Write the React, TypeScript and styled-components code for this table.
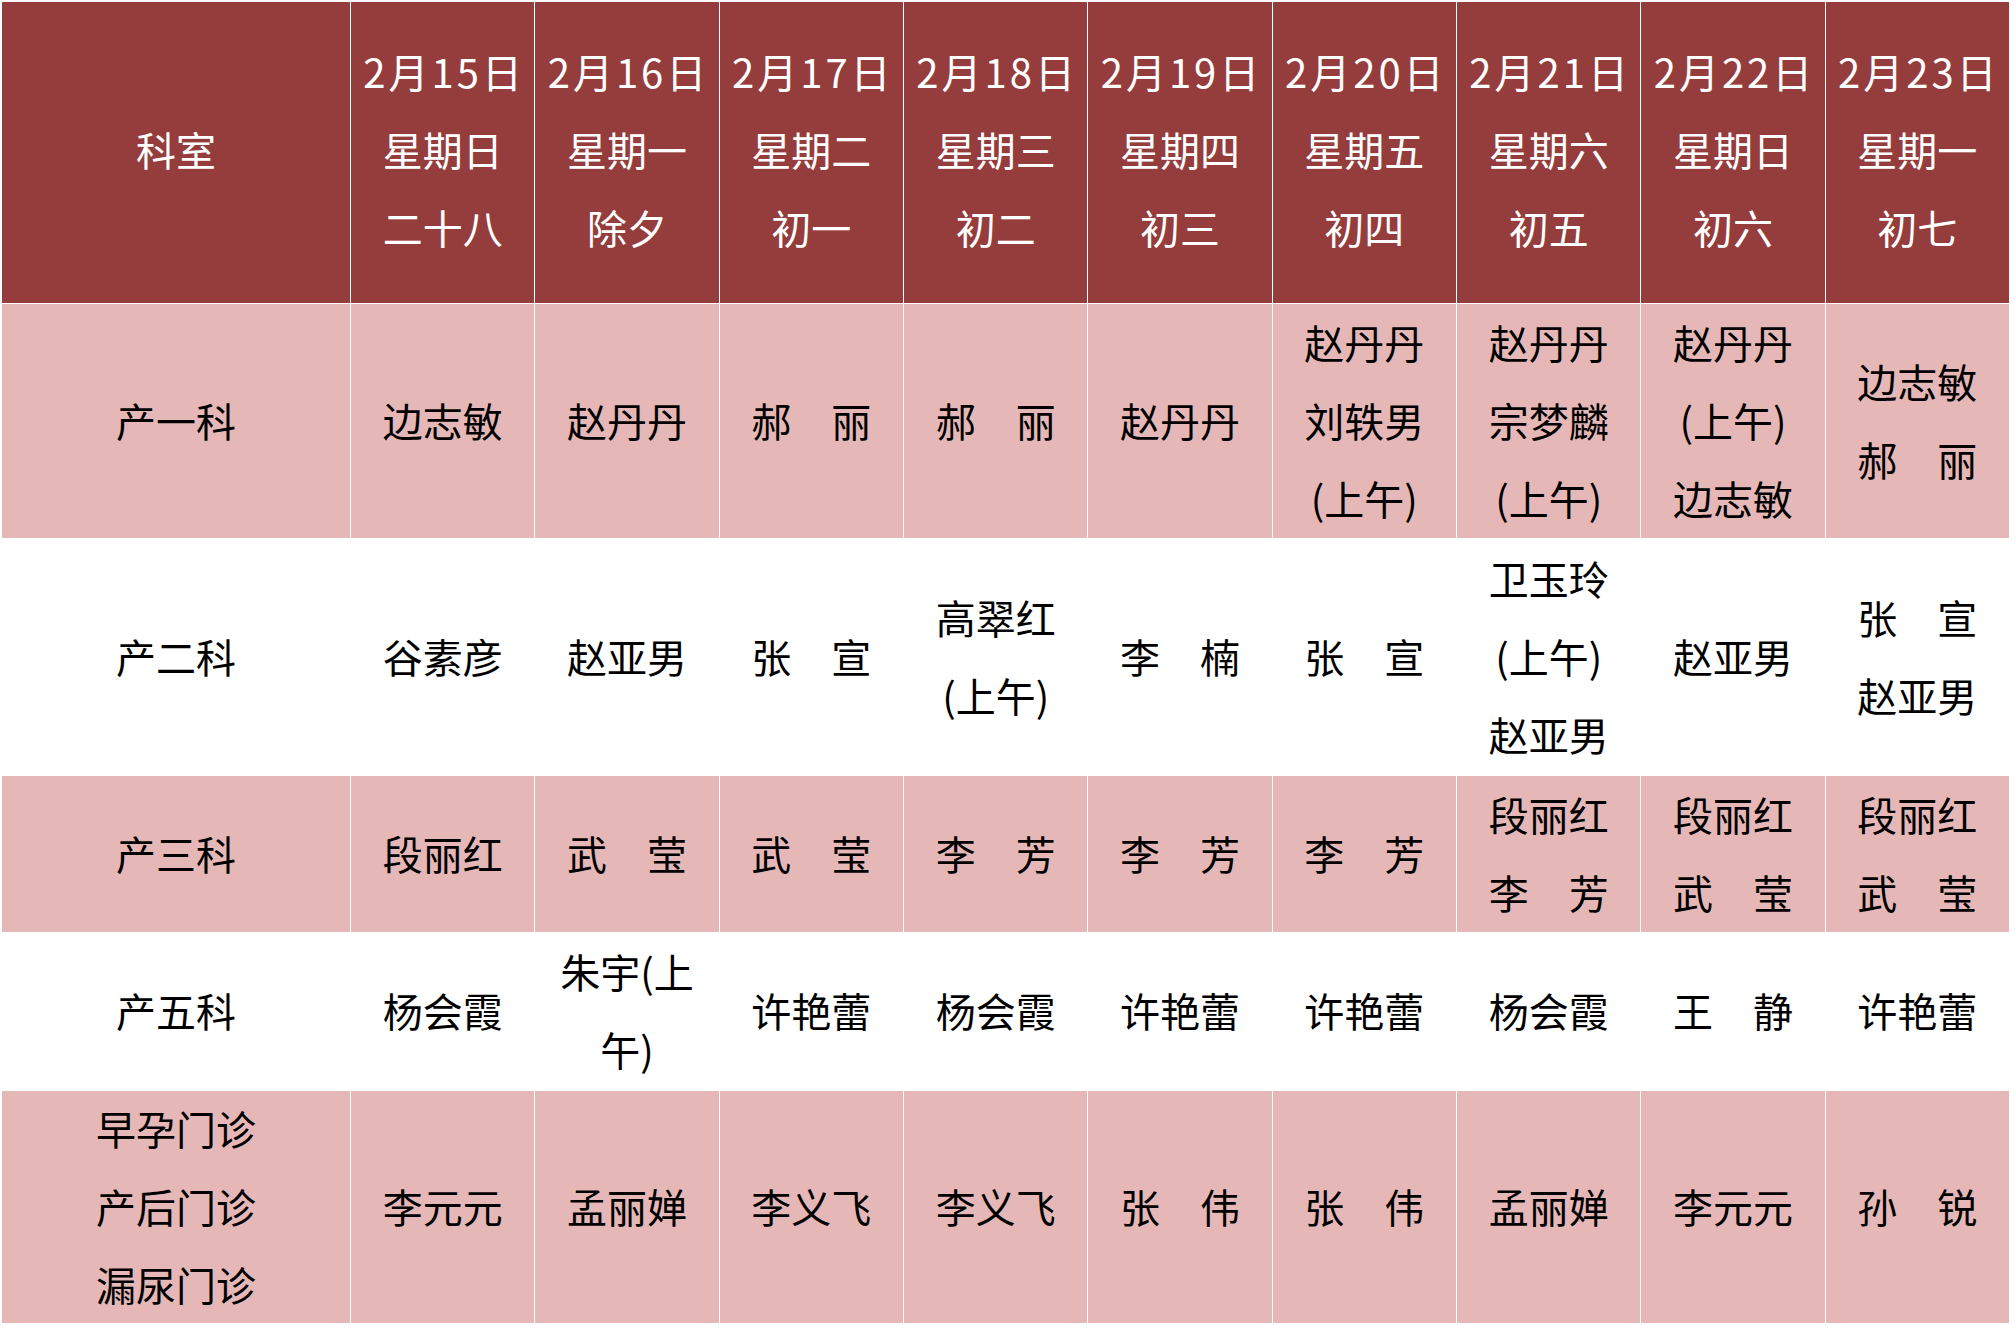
import React from 'react';
import styled, { createGlobalStyle } from 'styled-components';

const GlobalStyle = createGlobalStyle`
  html, body {
    margin: 0;
    padding: 0;
    background: #fff;
  }
  body {
    font-family: "Noto Sans CJK SC", "Noto Sans", sans-serif;
  }
`;

type Tone = 'head' | 'pink' | 'plain';

const Page = styled.div`
  padding: 2px 0 0 2px;
`;

const Table = styled.div`
  display: grid;
  width: 2007px;
  grid-template-columns: 348px repeat(9, 1fr);
  grid-template-rows: 301px 234px 236px 156px 157px 232px;
  gap: 1px;
  background: #fff;
`;

const Cell = styled.div<{ $tone: Tone }>`
  display: flex;
  flex-direction: column;
  align-items: center;
  justify-content: center;
  box-sizing: border-box;
  padding-bottom: ${({ $tone }) => ($tone === 'head' ? '7px' : '3px')};
  background: ${({ $tone }) =>
    $tone === 'head' ? '#953d3c' : $tone === 'pink' ? '#e5b8b7' : '#ffffff'};
  color: ${({ $tone }) => ($tone === 'head' ? '#ffffff' : '#000000')};
  font-size: 40px;
  line-height: 78px;
  white-space: nowrap;
  overflow: hidden;
`;

const Line = styled.span<{ $date?: boolean }>`
  display: block;
  letter-spacing: ${({ $date }) => ($date ? '3px' : '0')};
  margin-right: ${({ $date }) => ($date ? '-3px' : '0')};
`;

const days = [
  ['2月15日', '星期日', '二十八'],
  ['2月16日', '星期一', '除夕'],
  ['2月17日', '星期二', '初一'],
  ['2月18日', '星期三', '初二'],
  ['2月19日', '星期四', '初三'],
  ['2月20日', '星期五', '初四'],
  ['2月21日', '星期六', '初五'],
  ['2月22日', '星期日', '初六'],
  ['2月23日', '星期一', '初七'],
];

// each cell is a list of lines
const rows: { tone: Tone; dept: string[]; cells: string[][] }[] = [
  {
    tone: 'pink',
    dept: ['产一科'],
    cells: [
      ['边志敏'],
      ['赵丹丹'],
      ['郝　丽'],
      ['郝　丽'],
      ['赵丹丹'],
      ['赵丹丹', '刘轶男', '(上午)'],
      ['赵丹丹', '宗梦麟', '(上午)'],
      ['赵丹丹', '(上午)', '边志敏'],
      ['边志敏', '郝　丽'],
    ],
  },
  {
    tone: 'plain',
    dept: ['产二科'],
    cells: [
      ['谷素彦'],
      ['赵亚男'],
      ['张　宣'],
      ['高翠红', '(上午)'],
      ['李　楠'],
      ['张　宣'],
      ['卫玉玲', '(上午)', '赵亚男'],
      ['赵亚男'],
      ['张　宣', '赵亚男'],
    ],
  },
  {
    tone: 'pink',
    dept: ['产三科'],
    cells: [
      ['段丽红'],
      ['武　莹'],
      ['武　莹'],
      ['李　芳'],
      ['李　芳'],
      ['李　芳'],
      ['段丽红', '李　芳'],
      ['段丽红', '武　莹'],
      ['段丽红', '武　莹'],
    ],
  },
  {
    tone: 'plain',
    dept: ['产五科'],
    cells: [
      ['杨会霞'],
      ['朱宇(上', '午)'],
      ['许艳蕾'],
      ['杨会霞'],
      ['许艳蕾'],
      ['许艳蕾'],
      ['杨会霞'],
      ['王　静'],
      ['许艳蕾'],
    ],
  },
  {
    tone: 'pink',
    dept: ['早孕门诊', '产后门诊', '漏尿门诊'],
    cells: [
      ['李元元'],
      ['孟丽婵'],
      ['李义飞'],
      ['李义飞'],
      ['张　伟'],
      ['张　伟'],
      ['孟丽婵'],
      ['李元元'],
      ['孙　锐'],
    ],
  },
];

const App: React.FC = () => {
  return (
    <Page>
      <GlobalStyle />
      <Table>
        <Cell $tone="head">
          <Line>科室</Line>
        </Cell>
        {days.map((d) => (
          <Cell $tone="head" key={d[0]}>
            <Line $date>{d[0]}</Line>
            <Line>{d[1]}</Line>
            <Line>{d[2]}</Line>
          </Cell>
        ))}
        {rows.map((r) => (
          <React.Fragment key={r.dept.join()}>
            <Cell $tone={r.tone}>
              {r.dept.map((t) => (
                <Line key={t}>{t}</Line>
              ))}
            </Cell>
            {r.cells.map((lines, i) => (
              <Cell $tone={r.tone} key={i}>
                {lines.map((t, j) => (
                  <Line key={j}>{t}</Line>
                ))}
              </Cell>
            ))}
          </React.Fragment>
        ))}
      </Table>
    </Page>
  );
};

export default App;
